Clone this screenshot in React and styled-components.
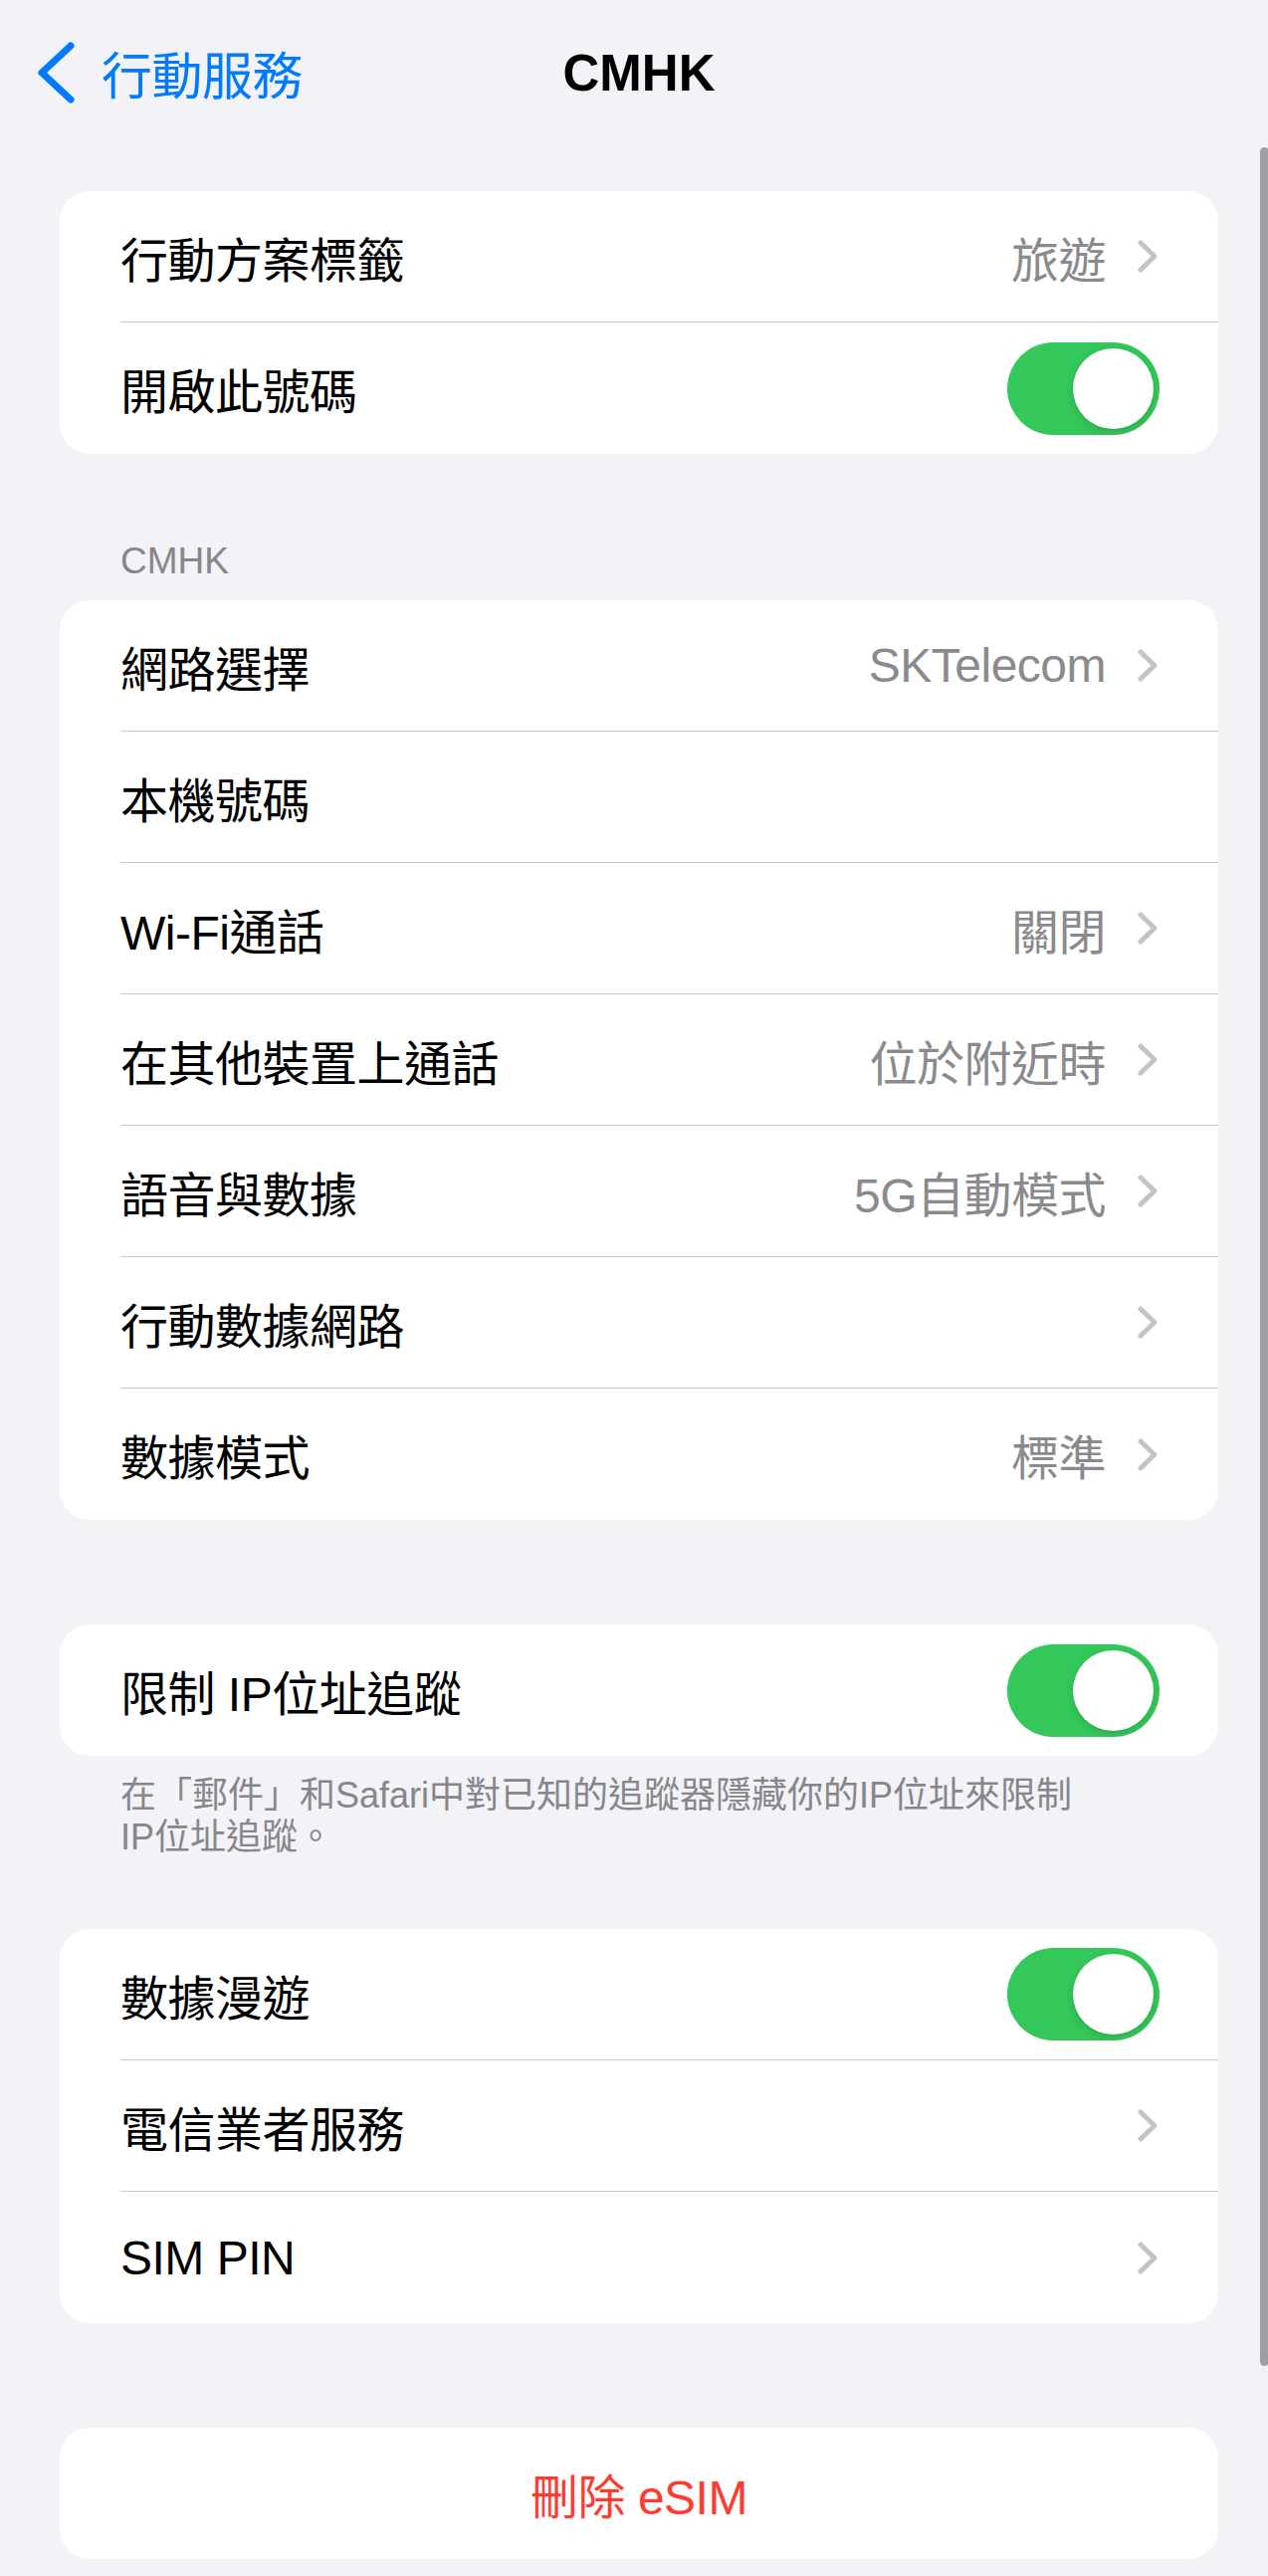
import React from 'react';
import styled, { createGlobalStyle } from 'styled-components';

const GlobalStyle = createGlobalStyle`
  html, body {
    margin: 0;
    padding: 0;
    background: #f2f2f7;
  }
  body {
    font-family: "Liberation Sans", "Noto Sans CJK TC", sans-serif;
    -webkit-font-smoothing: antialiased;
  }
`;

const Viewport = styled.div`
  width: 1274px;
  height: 2588px;
  overflow: hidden;
  background: #f2f2f7;
`;

// the phone screen is a little wider than the capture, so it is clipped on the right
const Screen = styled.div`
  position: relative;
  width: 1284px;
`;

const NavBar = styled.header`
  height: 146px;
  padding: 0 36px;
  box-sizing: border-box;
  display: grid;
  grid-template-columns: 1fr auto 1fr;
  align-items: center;
`;

const BackButton = styled.div`
  display: flex;
  align-items: center;
  gap: 26px;
  color: #007aff;
  font-size: 51px;
  letter-spacing: -0.5px;
`;

const Title = styled.h1`
  margin: 0;
  font-size: 51px;
  font-weight: 700;
  color: #000;
`;

const Content = styled.main`
  padding: 46px 60px 0;
  display: flex;
  flex-direction: column;
`;

const Group = styled.section`
  background: #fff;
  border-radius: 30px;
  overflow: hidden;
  margin-top: ${({ $gap }) => $gap || 0}px;
`;

const Row = styled.div`
  height: 132px;
  padding-left: 61px;
  display: flex;

  &:last-child > div {
    border-bottom: none;
  }
`;

const RowBody = styled.div`
  flex: 1;
  display: flex;
  align-items: center;
  justify-content: space-between;
  padding-right: ${({ $toggle }) => ($toggle ? 59 : 61)}px;
  border-bottom: 1px solid #c8c8cb;
`;

const Label = styled.span`
  font-size: 48px;
  letter-spacing: -0.5px;
  color: #000;
`;

const Detail = styled.div`
  display: flex;
  align-items: center;
`;

const Value = styled.span`
  font-size: 48px;
  letter-spacing: -0.5px;
  color: #8a8a8e;
  margin-right: 32px;
`;

const SectionHeader = styled.div`
  margin: 86px 0 17px;
  padding-left: 61px;
  font-size: 37px;
  line-height: 44px;
  color: #86868b;
`;

const Footer = styled.p`
  margin: 0;
  padding: 19px 61px 0;
  font-size: 36px;
  line-height: 42px;
  color: #86868b;
`;

const Track = styled.div`
  width: 153px;
  height: 93px;
  border-radius: 47px;
  background: ${({ $on }) => ($on ? '#34c759' : '#e9e9eb')};
  padding: 6px;
  box-sizing: border-box;
  display: flex;
  justify-content: ${({ $on }) => ($on ? 'flex-end' : 'flex-start')};
`;

const Knob = styled.div`
  width: 81px;
  height: 81px;
  border-radius: 50%;
  background: #fff;
  box-shadow: 0 3px 8px rgba(0, 0, 0, 0.12), 0 1px 2px rgba(0, 0, 0, 0.08);
`;

const DangerRow = styled.div`
  height: 132px;
  display: flex;
  align-items: center;
  justify-content: center;
  font-size: 48px;
  letter-spacing: -0.5px;
  color: #ff3b30;
`;

const ScrollIndicator = styled.div`
  position: absolute;
  top: 148px;
  right: 9px;
  width: 9px;
  height: 2229px;
  border-radius: 5px;
  background: #9f9fa3;
`;

const BackChevron = () => (
  <svg width="40" height="62" viewBox="0 0 40 62">
    <path d="M35 4 L6 31 L35 58" fill="none" stroke="#007aff" strokeWidth="7" strokeLinecap="round" strokeLinejoin="round" />
  </svg>
);

const Chevron = () => (
  <svg width="20" height="33" viewBox="0 0 20 33">
    <path d="M3 3 L17 16.5 L3 30" fill="none" stroke="#c4c4c7" strokeWidth="5" strokeLinecap="round" strokeLinejoin="round" />
  </svg>
);

const Toggle = ({ on = true }) => (
  <Track $on={on}>
    <Knob />
  </Track>
);

const LinkRow = ({ label, value }) => (
  <Row>
    <RowBody>
      <Label>{label}</Label>
      <Detail>
        {value && <Value>{value}</Value>}
        <Chevron />
      </Detail>
    </RowBody>
  </Row>
);

const PlainRow = ({ label }) => (
  <Row>
    <RowBody>
      <Label>{label}</Label>
    </RowBody>
  </Row>
);

const SwitchRow = ({ label }) => (
  <Row>
    <RowBody $toggle>
      <Label>{label}</Label>
      <Toggle on />
    </RowBody>
  </Row>
);

const App = () => {
  return (
    <Viewport>
      <GlobalStyle />
      <Screen>
        <NavBar>
          <BackButton>
            <BackChevron />
            <span>行動服務</span>
          </BackButton>
          <Title>CMHK</Title>
          <div />
        </NavBar>

        <Content>
          <Group>
            <LinkRow label="行動方案標籤" value="旅遊" />
            <SwitchRow label="開啟此號碼" />
          </Group>

          <SectionHeader>CMHK</SectionHeader>
          <Group>
            <LinkRow label="網路選擇" value="SKTelecom" />
            <PlainRow label="本機號碼" />
            <LinkRow label="Wi-Fi通話" value="關閉" />
            <LinkRow label="在其他裝置上通話" value="位於附近時" />
            <LinkRow label="語音與數據" value="5G自動模式" />
            <LinkRow label="行動數據網路" />
            <LinkRow label="數據模式" value="標準" />
          </Group>

          <Group $gap={105}>
            <SwitchRow label="限制 IP位址追蹤" />
          </Group>
          <Footer>
            在「郵件」和Safari中對已知的追蹤器隱藏你的IP位址來限制
            <br />
            IP位址追蹤。
          </Footer>

          <Group $gap={71}>
            <SwitchRow label="數據漫遊" />
            <LinkRow label="電信業者服務" />
            <LinkRow label="SIM PIN" />
          </Group>

          <Group $gap={105}>
            <DangerRow>刪除 eSIM</DangerRow>
          </Group>
        </Content>

        <ScrollIndicator />
      </Screen>
    </Viewport>
  );
};

export default App;
